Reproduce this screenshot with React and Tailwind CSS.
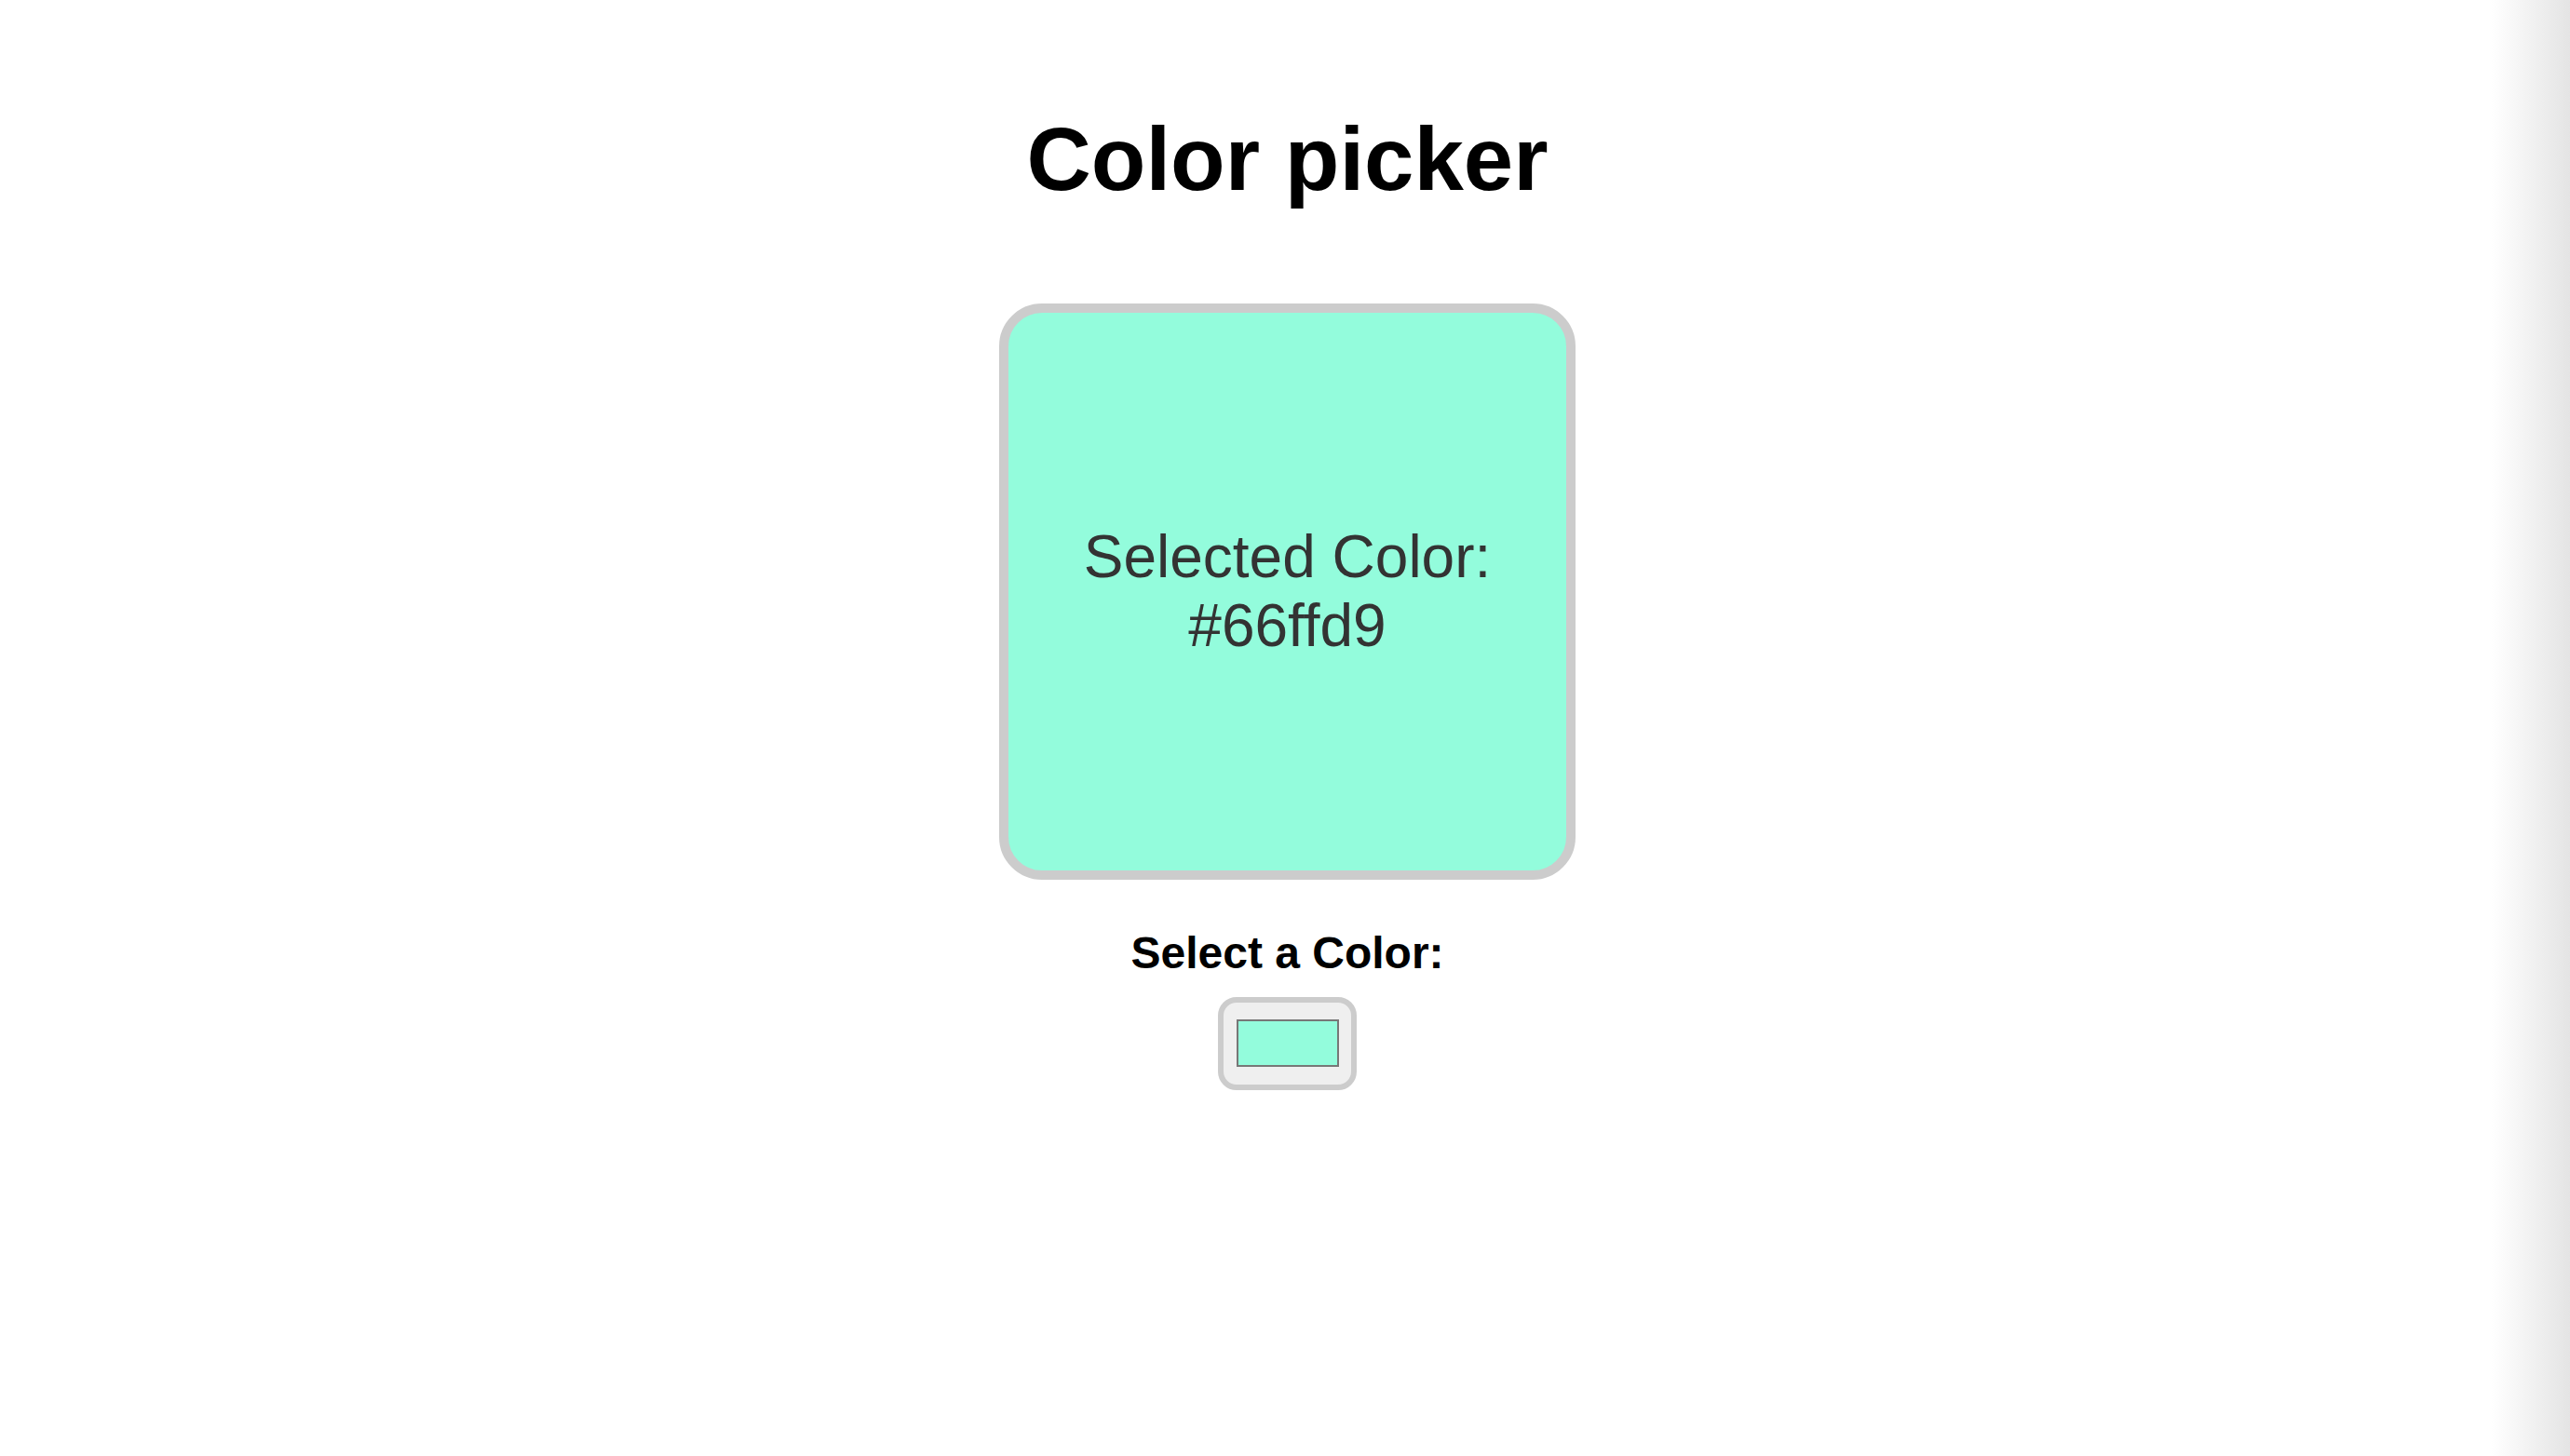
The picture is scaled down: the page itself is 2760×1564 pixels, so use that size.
import React from 'react';

const selected = '#66ffd9';

const App = () => {
    return (
        <div className="relative min-h-screen w-full bg-white font-['Liberation_Sans',Arial,sans-serif]">
            <div className="flex flex-col items-center pt-[116px] pl-[5px]">
                <h1 className="text-[96px] leading-[1.15] font-bold text-black">Color picker</h1>

                <div className="mt-[100px] w-[619px] h-[619px] rounded-[46px] border-[10px] border-[#cccccc] bg-[#93fcdc] flex items-center justify-center">
                    <p className="text-[64px] leading-[1.15] text-[#333333] text-center">
                        <span className="block">Selected Color:</span>
                        <span className="block">{selected}</span>
                    </p>
                </div>

                <label className="mt-[51px] text-[48px] leading-[1.15] font-bold text-black">Select a Color:</label>

                <div className="mt-[19px] w-[149px] h-[100px] rounded-[20px] border-[6px] border-[#cccccc] bg-[#efefef] flex items-center justify-center">
                    <div className="w-[110px] h-[51px] border-2 border-[#777777] bg-[#93fcdc]" />
                </div>
            </div>

            {/* window edge shade */}
            <div className="absolute top-0 right-0 h-full w-[84px] bg-gradient-to-r from-white to-[#e4e4e4]" />
        </div>
    );
};

export default App;
